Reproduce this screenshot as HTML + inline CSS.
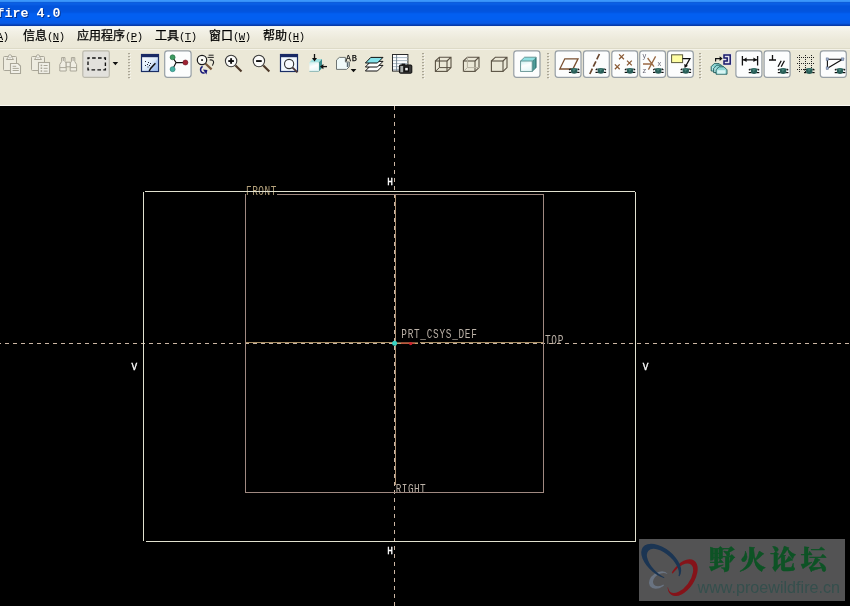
<!DOCTYPE html>
<html lang="zh"><head><meta charset="utf-8"><title>Pro/ENGINEER Wildfire 4.0</title>
<style>
html,body{margin:0;padding:0;background:#000;overflow:hidden;width:850px;height:606px}
svg{display:block;position:absolute;left:0;top:0;will-change:transform;opacity:0.999}
.mono{font-family:"Liberation Mono","DejaVu Sans Mono",monospace}
.cjk{font-family:"Liberation Sans","Noto Sans CJK SC","WenQuanYi Zen Hei",sans-serif}
.song{font-family:"Liberation Serif","Noto Serif CJK SC",serif}
.sans{font-family:"Liberation Sans",sans-serif}
</style></head><body>
<svg width="850" height="606" viewBox="0 0 850 606">
<defs>
<linearGradient id="tb" x1="0" y1="0" x2="0" y2="1">
<stop offset="0" stop-color="#3f8cf3"/>
<stop offset="0.10" stop-color="#1c6cee"/>
<stop offset="0.22" stop-color="#0a5be4"/>
<stop offset="0.55" stop-color="#0a5ce8"/>
<stop offset="0.80" stop-color="#0b5ae6"/>
<stop offset="0.92" stop-color="#0648cc"/>
<stop offset="1" stop-color="#0338b0"/>
</linearGradient>
<linearGradient id="mb" x1="0" y1="0" x2="0" y2="1">
<stop offset="0" stop-color="#eef3f6"/>
<stop offset="0.06" stop-color="#f8f7f0"/>
<stop offset="0.25" stop-color="#f3f1e6"/>
<stop offset="0.6" stop-color="#edeadb"/>
<stop offset="1" stop-color="#ebe8d7"/>
</linearGradient>
<linearGradient id="btn" x1="0" y1="0" x2="0" y2="1">
<stop offset="0" stop-color="#ffffff"/>
<stop offset="1" stop-color="#f6f6f2"/>
</linearGradient>
</defs>

<rect x="0" y="0" width="850" height="606" fill="#000"/>
<g shape-rendering="crispEdges"><rect x="0" y="0" width="850" height="1" fill="#3c98fc"/><rect x="0" y="1" width="850" height="1" fill="#3690f8"/><rect x="0" y="2" width="850" height="1" fill="#0e5edc"/><rect x="0" y="3" width="850" height="1" fill="#0a60e6"/><rect x="0" y="4" width="850" height="1" fill="#0a5ee4"/><rect x="0" y="5" width="850" height="1" fill="#0658e0"/><rect x="0" y="6" width="850" height="1" fill="#0355de"/><rect x="0" y="7" width="850" height="1" fill="#0355de"/><rect x="0" y="8" width="850" height="1" fill="#0355de"/><rect x="0" y="9" width="850" height="1" fill="#0355de"/><rect x="0" y="10" width="850" height="1" fill="#0355de"/><rect x="0" y="11" width="850" height="1" fill="#0356e0"/><rect x="0" y="12" width="850" height="1" fill="#0258e6"/><rect x="0" y="13" width="850" height="1" fill="#035eee"/><rect x="0" y="14" width="850" height="1" fill="#0360f2"/><rect x="0" y="15" width="850" height="1" fill="#0360f2"/><rect x="0" y="16" width="850" height="1" fill="#0360f2"/><rect x="0" y="17" width="850" height="1" fill="#0360f2"/><rect x="0" y="18" width="850" height="1" fill="#0360f2"/><rect x="0" y="19" width="850" height="1" fill="#0360f0"/><rect x="0" y="20" width="850" height="1" fill="#065eee"/><rect x="0" y="21" width="850" height="1" fill="#0a5ce8"/><rect x="0" y="22" width="850" height="1" fill="#0a5ce8"/><rect x="0" y="23" width="850" height="1" fill="#0a58de"/><rect x="0" y="24" width="850" height="1" fill="#0648c6"/><rect x="0" y="25" width="850" height="1" fill="#0a3ca8"/></g>
<rect x="0" y="26" width="850" height="23" fill="url(#mb)"/>
<rect x="0" y="48" width="850" height="1" fill="#dedbc8"/>
<rect x="0" y="49" width="850" height="56" fill="#ece9d8"/>
<rect x="0" y="49" width="850" height="1" fill="#f6f4ea"/>
<rect x="0" y="105" width="850" height="1" fill="#fbfaf4"/>
<text class="mono" x="-2.4" y="18" font-size="13.33" font-weight="bold" fill="#0a246a" opacity="0.7" xml:space="preserve">fire 4.0</text>
<text class="mono" x="-3.4" y="17" font-size="13.33" font-weight="bold" fill="#fff" xml:space="preserve">fire 4.0</text>
<text class="mono" x="-9" y="40" font-size="10.6" fill="#000" textLength="18" lengthAdjust="spacing">(A)</text>
<rect x="-3" y="41" width="6" height="1" fill="#000"/>
<text y="40" fill="#000"><tspan class="cjk" x="23" font-size="12" stroke="#000" stroke-width="0.25" textLength="24" lengthAdjust="spacing">信息</tspan><tspan class="mono" x="47" font-size="10.6" textLength="18" lengthAdjust="spacing">(N)</tspan></text><rect x="53" y="41" width="6" height="1" fill="#000"/>
<text y="40" fill="#000"><tspan class="cjk" x="77" font-size="12" stroke="#000" stroke-width="0.25" textLength="48" lengthAdjust="spacing">应用程序</tspan><tspan class="mono" x="125" font-size="10.6" textLength="18" lengthAdjust="spacing">(P)</tspan></text><rect x="131" y="41" width="6" height="1" fill="#000"/>
<text y="40" fill="#000"><tspan class="cjk" x="155" font-size="12" stroke="#000" stroke-width="0.25" textLength="24" lengthAdjust="spacing">工具</tspan><tspan class="mono" x="179" font-size="10.6" textLength="18" lengthAdjust="spacing">(T)</tspan></text><rect x="185" y="41" width="6" height="1" fill="#000"/>
<text y="40" fill="#000"><tspan class="cjk" x="209" font-size="12" stroke="#000" stroke-width="0.25" textLength="24" lengthAdjust="spacing">窗口</tspan><tspan class="mono" x="233" font-size="10.6" textLength="18" lengthAdjust="spacing">(W)</tspan></text><rect x="239" y="41" width="6" height="1" fill="#000"/>
<text y="40" fill="#000"><tspan class="cjk" x="263" font-size="12" stroke="#000" stroke-width="0.25" textLength="24" lengthAdjust="spacing">帮助</tspan><tspan class="mono" x="287" font-size="10.6" textLength="18" lengthAdjust="spacing">(H)</tspan></text><rect x="293" y="41" width="6" height="1" fill="#000"/>
<g id="toolbar">
<g fill="none" stroke="#aaa799" stroke-width="1"><rect x="3.5" y="56.5" width="13" height="14" rx="1" fill="#efede1"/><path d="M6.5 59.5 L8 57.4 Q8.2 54.7 10 54.7 Q11.8 54.7 12 57.4 L13.5 59.5 Z" fill="#f7f6ef"/><path d="M8.8 58.2 L10 56.6 L11.2 58.2 Z" fill="#aaa799" stroke="none" opacity="0.7"/></g>
<g fill="#f3f2ea" stroke="#aaa799" stroke-width="1.1"><path d="M10.5 63.5 H18 L20.5 66 V73.5 H10.5 Z"/></g>
<g stroke="#aaa799" stroke-width="1"><path d="M12.6 66.3 H16.2 M12.6 68.4 H18.8 M12.6 70.5 H18.8"/></g>
<g fill="none" stroke="#aaa799" stroke-width="1"><rect x="31.5" y="56.5" width="13" height="14" rx="1" fill="#efede1"/><path d="M34.5 59.5 L36 57.4 Q36.2 54.7 38 54.7 Q39.8 54.7 40 57.4 L41.5 59.5 Z" fill="#f7f6ef"/><path d="M36.8 58.2 L38 56.6 L39.2 58.2 Z" fill="#aaa799" stroke="none" opacity="0.7"/></g>
<g fill="#f3f2ea" stroke="#aaa799" stroke-width="1.1"><rect x="38.5" y="62.5" width="11" height="11"/></g>
<g fill="#aaa799"><rect x="40.6" y="64.6" width="1.6" height="1.6"/><rect x="40.6" y="67.4" width="1.6" height="1.6"/><rect x="40.6" y="70.2" width="1.6" height="1.6"/><rect x="43.6" y="65" width="4" height="1"/><rect x="43.6" y="67.8" width="4" height="1"/><rect x="43.6" y="70.6" width="4" height="1"/></g>
<g fill="#f1efe4" stroke="#aaa799" stroke-width="1"><path d="M59.8 71 V64.5 L61.6 61.6 V57.6 H65 V61.6 L66.2 63 V71 Z"/><path d="M70.2 71 V63 L71.4 61.6 V57.6 H74.8 V61.6 L76.6 64.5 V71 Z"/><rect x="66.2" y="62.2" width="4" height="4.6"/><path d="M59.8 67.6 H66.2 M70.2 67.6 H76.6 M63.3 57.6 V61 M73.1 57.6 V61" fill="none"/></g>
<rect x="82.8" y="50.9" width="26.5" height="26.4" rx="1.8" ry="1.8" fill="#e3e2dd" stroke="#bcbaad" stroke-width="1.2"/>
<rect x="88" y="58" width="17.4" height="11.8" fill="none" stroke="#111" stroke-width="1.35" stroke-dasharray="3.6 2.3" stroke-dashoffset="1.8"/>
<path d="M112.6 62 H118.2 L115.4 65.2 Z" fill="#111"/>
<rect x="129" y="54" width="2" height="1" fill="#f8f7ef"/><rect x="128" y="53" width="2" height="1.3" fill="#aba795"/><rect x="129" y="57" width="2" height="1" fill="#f8f7ef"/><rect x="128" y="56" width="2" height="1.3" fill="#aba795"/><rect x="129" y="60" width="2" height="1" fill="#f8f7ef"/><rect x="128" y="59" width="2" height="1.3" fill="#aba795"/><rect x="129" y="63" width="2" height="1" fill="#f8f7ef"/><rect x="128" y="62" width="2" height="1.3" fill="#aba795"/><rect x="129" y="66" width="2" height="1" fill="#f8f7ef"/><rect x="128" y="65" width="2" height="1.3" fill="#aba795"/><rect x="129" y="69" width="2" height="1" fill="#f8f7ef"/><rect x="128" y="68" width="2" height="1.3" fill="#aba795"/><rect x="129" y="72" width="2" height="1" fill="#f8f7ef"/><rect x="128" y="71" width="2" height="1.3" fill="#aba795"/><rect x="129" y="75" width="2" height="1" fill="#f8f7ef"/><rect x="128" y="74" width="2" height="1.3" fill="#aba795"/><rect x="129" y="78" width="2" height="1" fill="#f8f7ef"/><rect x="128" y="77" width="2" height="1.3" fill="#aba795"/>
<defs><linearGradient id="rp" x1="0" y1="0" x2="1" y2="1"><stop offset="0" stop-color="#ffffff"/><stop offset="0.5" stop-color="#e2effc"/><stop offset="1" stop-color="#9dbcef"/></linearGradient></defs>
<rect x="141.5" y="54.5" width="17" height="17" fill="url(#rp)" stroke="#1b2f66" stroke-width="1.2"/>
<rect x="141" y="54" width="18" height="3.2" fill="#1a2a66"/>
<path d="M158 58 L158 71 L150 71 Z" fill="#9fbdee" opacity="0.55"/>
<path d="M149.2 71 L150.6 68.4 L155.4 63.2" stroke="#111" stroke-width="1.5" fill="none"/>
<g fill="#223"><rect x="145" y="61" width="1" height="1"/><rect x="148" y="62" width="1" height="1"/><rect x="147" y="64" width="1" height="1"/><rect x="145" y="65" width="1" height="1"/><rect x="149" y="65" width="1" height="1"/><rect x="150" y="63" width="1" height="1"/><rect x="147.5" y="66.5" width="1" height="1"/></g>
<rect x="164.7" y="50.9" width="26.4" height="26.4" rx="2.8" ry="2.8" fill="#fdfefe" stroke="#98a0a6" stroke-width="1.2"/>
<path d="M172.6 57.3 L176.1 62.6 L172.6 69.3 M176.1 62.6 H185.4" stroke="#111" stroke-width="1.1" fill="none"/>
<circle cx="172.6" cy="57.3" r="2.5" fill="#3f9c62" stroke="#1d6a3c" stroke-width="0.6"/>
<circle cx="172.6" cy="69.2" r="2.5" fill="#49b3a4" stroke="#1f7a70" stroke-width="0.6"/>
<circle cx="185.4" cy="62.5" r="2.5" fill="#a02434" stroke="#6c1420" stroke-width="0.6"/>
<path d="M205.6 63.8 L211.6 69.4" stroke="#7a5a3e" stroke-width="2.2"/>
<circle cx="202" cy="60" r="4.7" fill="#fbfbf6" stroke="#1a1a1a" stroke-width="1.2"/>
<rect x="201.2" y="59.2" width="1.7" height="1.7" fill="#111"/>
<path d="M208.6 55.2 H213.6 M207.6 57.4 H213.8" stroke="#222" stroke-width="1"/>
<path d="M209.6 60 Q213.8 59.4 213.6 62.6 L212.4 65.6" stroke="#222" stroke-width="1.1" fill="none"/>
<path d="M202.6 66.4 Q199.4 68.6 201.2 71.8 Q202.6 73.6 204.6 72.8" stroke="#1a1a7a" stroke-width="1.5" fill="none"/>
<path d="M203 69.6 L207.4 70 L206.4 74.4 Z" fill="#1a1a7a"/>
<path d="M235.5 65.4 L241.5 71.4" stroke="#4e3a2a" stroke-width="2.1"/><circle cx="231.1" cy="61" r="5.7" fill="#fcfcfa" stroke="#3c3c3c" stroke-width="1.1"/><rect x="228.3" y="60.1" width="5.6" height="1.9" fill="#111"/><rect x="230.15" y="58.2" width="1.9" height="5.6" fill="#111"/>
<path d="M263.3 65.4 L269.3 71.4" stroke="#4e3a2a" stroke-width="2.1"/><circle cx="258.9" cy="61" r="5.7" fill="#fcfcfa" stroke="#3c3c3c" stroke-width="1.1"/><rect x="256.1" y="60.1" width="5.6" height="1.9" fill="#111"/>
<rect x="280.5" y="54.5" width="17" height="17" fill="#f2f9ff" stroke="#1b2f66" stroke-width="1.2"/>
<rect x="280" y="54" width="18" height="3.2" fill="#1a2a66"/>
<path d="M292.6 67.6 L297.4 72.4" stroke="#4e3a3a" stroke-width="2"/>
<circle cx="289.1" cy="64" r="4.6" fill="#f8fbff" stroke="#333" stroke-width="1.1"/>
<defs><linearGradient id="cf" x1="0" y1="0" x2="0.3" y2="1"><stop offset="0" stop-color="#c9f1f1"/><stop offset="0.5" stop-color="#ffffff"/><stop offset="1" stop-color="#e8fafa"/></linearGradient></defs>
<path d="M309.4 62.4 L312.6 59 H322 L318.8 62.4 Z" fill="#9fe2e2"/>
<path d="M318.8 62.4 L322 59 V68 L318.8 71.4 Z" fill="#3a8c8c"/>
<rect x="309.4" y="62.4" width="9.4" height="9" fill="url(#cf)"/>
<path d="M309.4 71.4 H318.8" stroke="#7aa" stroke-width="0.8"/>
<path d="M314.5 54 V59.4" stroke="#111" stroke-width="1.3"/><path d="M312 58 H317 L314.5 61.4 Z" fill="#111"/>
<path d="M327 66.6 H322" stroke="#111" stroke-width="1.3"/><path d="M323.4 64 V69.2 L320 66.6 Z" fill="#111"/>
<path d="M336.5 69.4 V60 L339.4 57.4 H345.4 V62 H349.4 V66.6 L346.6 69.4 Z" fill="#f1fbfb" stroke="#6f7674" stroke-width="1"/>
<path d="M347.6 62.4 V67" stroke="#5a6a72" stroke-width="1.6"/>
<text class="mono" x="345.8" y="60.9" font-size="8.6" fill="#111" stroke="#111" stroke-width="0.25" letter-spacing="0.7">AB</text>
<path d="M350.6 69 H356.4 L353.5 72.2 Z" fill="#111"/>
<path d="M365.4 71 L370.8 65.4 H383 L377.4 71 Z" fill="#ffffff" stroke="#111" stroke-width="1"/>
<path d="M365.4 67 L370.8 61.4 H383 L377.4 67 Z" fill="#ffffff" stroke="#111" stroke-width="1"/>
<path d="M365.4 63 L370.8 57.4 H383 L377.4 63 Z" fill="#86e3ec" stroke="#111" stroke-width="1"/>
<rect x="392.5" y="54.5" width="15.4" height="16.6" fill="#fdfefe" stroke="#2a2a2a" stroke-width="1"/>
<path d="M393 57.6 H407.6 M393 60.6 H407.6 M393 63.6 H407.6 M393 66.6 H400 M393 69.4 H400" stroke="#9fb0bc" stroke-width="0.9"/>
<path d="M396.6 55 V71" stroke="#6c7c88" stroke-width="0.9"/>
<rect x="399.4" y="65" width="12.4" height="8.2" rx="1" fill="#3a3a3a" stroke="#0c0c0c" stroke-width="1"/>
<rect x="401.6" y="63.6" width="3.6" height="2" fill="#1a1a1a"/>
<rect x="400.4" y="66" width="2.6" height="6.2" fill="#a9aeac"/>
<rect x="403.8" y="66.4" width="5.2" height="5.4" fill="#111"/>
<rect x="405.2" y="67.8" width="2.6" height="2.6" fill="#f4f4f4"/>
<rect x="423" y="54" width="2" height="1" fill="#f8f7ef"/><rect x="422" y="53" width="2" height="1.3" fill="#aba795"/><rect x="423" y="57" width="2" height="1" fill="#f8f7ef"/><rect x="422" y="56" width="2" height="1.3" fill="#aba795"/><rect x="423" y="60" width="2" height="1" fill="#f8f7ef"/><rect x="422" y="59" width="2" height="1.3" fill="#aba795"/><rect x="423" y="63" width="2" height="1" fill="#f8f7ef"/><rect x="422" y="62" width="2" height="1.3" fill="#aba795"/><rect x="423" y="66" width="2" height="1" fill="#f8f7ef"/><rect x="422" y="65" width="2" height="1.3" fill="#aba795"/><rect x="423" y="69" width="2" height="1" fill="#f8f7ef"/><rect x="422" y="68" width="2" height="1.3" fill="#aba795"/><rect x="423" y="72" width="2" height="1" fill="#f8f7ef"/><rect x="422" y="71" width="2" height="1.3" fill="#aba795"/><rect x="423" y="75" width="2" height="1" fill="#f8f7ef"/><rect x="422" y="74" width="2" height="1.3" fill="#aba795"/><rect x="423" y="78" width="2" height="1" fill="#f8f7ef"/><rect x="422" y="77" width="2" height="1.3" fill="#aba795"/>
<g fill="none" stroke="#5a5244" stroke-width="1.1"><rect x="435.4" y="61" width="11.6" height="10.4"/><path d="M435.4 61 L439.4 57.2 H451 V67.6 L447 71.4 M447 61 L451 57.2"/></g><g fill="none" stroke="#5a5244" stroke-width="1"><path d="M439.4 57.2 V67.6 H451 M439.4 67.6 L435.4 71.4"/></g>
<g fill="none" stroke="#5a5244" stroke-width="1.1"><rect x="463.4" y="61" width="11.6" height="10.4"/><path d="M463.4 61 L467.4 57.2 H479 V67.6 L475 71.4 M475 61 L479 57.2"/></g><g fill="none" stroke="#b9b4a4" stroke-width="1"><path d="M467.4 57.2 V67.6 H479 M467.4 67.6 L463.4 71.4"/></g>
<g fill="none" stroke="#5a5244" stroke-width="1.1"><rect x="491.4" y="61" width="11.6" height="10.4"/><path d="M491.4 61 L495.4 57.2 H507 V67.6 L503 71.4 M503 61 L507 57.2"/></g>
<rect x="513.8" y="50.9" width="26.2" height="26.4" rx="2.8" ry="2.8" fill="#fdfefe" stroke="#98a0a6" stroke-width="1.2"/>
<path d="M520.6 61 L524.6 57.2 H536.2 L532.2 61 Z" fill="#8fe0e2"/>
<path d="M532.2 61 L536.2 57.2 V67.6 L532.2 71.4 Z" fill="#2f7f7c"/>
<path d="M533.2 60.4 V70 M534.6 59 V68.8" stroke="#7fc4c0" stroke-width="0.5"/>
<rect x="520.6" y="61" width="11.6" height="10.4" fill="url(#cf)" stroke="#5f8f8f" stroke-width="0.9"/>
<path d="M520.6 61 L524.6 57.2 H536.2 V67.6 L532.2 71.4" fill="none" stroke="#4f8484" stroke-width="0.8"/>
<rect x="548" y="54" width="2" height="1" fill="#f8f7ef"/><rect x="547" y="53" width="2" height="1.3" fill="#aba795"/><rect x="548" y="57" width="2" height="1" fill="#f8f7ef"/><rect x="547" y="56" width="2" height="1.3" fill="#aba795"/><rect x="548" y="60" width="2" height="1" fill="#f8f7ef"/><rect x="547" y="59" width="2" height="1.3" fill="#aba795"/><rect x="548" y="63" width="2" height="1" fill="#f8f7ef"/><rect x="547" y="62" width="2" height="1.3" fill="#aba795"/><rect x="548" y="66" width="2" height="1" fill="#f8f7ef"/><rect x="547" y="65" width="2" height="1.3" fill="#aba795"/><rect x="548" y="69" width="2" height="1" fill="#f8f7ef"/><rect x="547" y="68" width="2" height="1.3" fill="#aba795"/><rect x="548" y="72" width="2" height="1" fill="#f8f7ef"/><rect x="547" y="71" width="2" height="1.3" fill="#aba795"/><rect x="548" y="75" width="2" height="1" fill="#f8f7ef"/><rect x="547" y="74" width="2" height="1.3" fill="#aba795"/><rect x="548" y="78" width="2" height="1" fill="#f8f7ef"/><rect x="547" y="77" width="2" height="1.3" fill="#aba795"/>
<rect x="555.2" y="50.9" width="25.8" height="26.4" rx="2.8" ry="2.8" fill="#fdfefe" stroke="#98a0a6" stroke-width="1.2"/>
<rect x="583.5" y="50.9" width="25.8" height="26.4" rx="2.8" ry="2.8" fill="#fdfefe" stroke="#98a0a6" stroke-width="1.2"/>
<rect x="611.8" y="50.9" width="25.8" height="26.4" rx="2.8" ry="2.8" fill="#fdfefe" stroke="#98a0a6" stroke-width="1.2"/>
<rect x="639.7" y="50.9" width="25.8" height="26.4" rx="2.8" ry="2.8" fill="#fdfefe" stroke="#98a0a6" stroke-width="1.2"/>
<rect x="667.5" y="50.9" width="25.8" height="26.4" rx="2.8" ry="2.8" fill="#fdfefe" stroke="#98a0a6" stroke-width="1.2"/>
<path d="M573.2 69 H559.8 L564.8 58.8 H578 L572.6 69.6" fill="none" stroke="#7a5030" stroke-width="1.3"/>
<g transform="translate(574.2 71)"><path d="M-3.5 -2.5 Q0 -3.7 3.5 -2.5 L2.9 2.1 Q0 3.3 -2.9 2.1 Z" fill="#2a5f59"/><path d="M-1.8 -2.6 L2 -2.6 L-0.4 1 Z" fill="#4d8c82" opacity="0.75"/><path d="M-3.6 -2.2 L-5.1 -0.9" stroke="#111" stroke-width="1.2" fill="none"/><path d="M3.6 -2.2 L5.1 -0.9" stroke="#111" stroke-width="1.2" fill="none"/><rect x="-5.3" y="0.8" width="2.3" height="1.2" fill="#111"/><rect x="3" y="0.8" width="2.3" height="1.2" fill="#111"/></g>
<path d="M599.4 54 L589.8 74" stroke="#6a4830" stroke-width="1.7" stroke-dasharray="6 2.1"/>
<g transform="translate(600.8 71)"><path d="M-3.5 -2.5 Q0 -3.7 3.5 -2.5 L2.9 2.1 Q0 3.3 -2.9 2.1 Z" fill="#2a5f59"/><path d="M-1.8 -2.6 L2 -2.6 L-0.4 1 Z" fill="#4d8c82" opacity="0.75"/><path d="M-3.6 -2.2 L-5.1 -0.9" stroke="#111" stroke-width="1.2" fill="none"/><path d="M3.6 -2.2 L5.1 -0.9" stroke="#111" stroke-width="1.2" fill="none"/><rect x="-5.3" y="0.8" width="2.3" height="1.2" fill="#111"/><rect x="3" y="0.8" width="2.3" height="1.2" fill="#111"/></g>
<path d="M619.1 54.4 L623.9 59.2 M623.9 54.4 L619.1 59.2" stroke="#8a5a34" stroke-width="1.3"/>
<path d="M627 60.6 L631.8 65.4 M631.8 60.6 L627 65.4" stroke="#8a5a34" stroke-width="1.3"/>
<path d="M614.9 64.4 L619.7 69.2 M619.7 64.4 L614.9 69.2" stroke="#8a5a34" stroke-width="1.3"/>
<g transform="translate(630 71)"><path d="M-3.5 -2.5 Q0 -3.7 3.5 -2.5 L2.9 2.1 Q0 3.3 -2.9 2.1 Z" fill="#2a5f59"/><path d="M-1.8 -2.6 L2 -2.6 L-0.4 1 Z" fill="#4d8c82" opacity="0.75"/><path d="M-3.6 -2.2 L-5.1 -0.9" stroke="#111" stroke-width="1.2" fill="none"/><path d="M3.6 -2.2 L5.1 -0.9" stroke="#111" stroke-width="1.2" fill="none"/><rect x="-5.3" y="0.8" width="2.3" height="1.2" fill="#111"/><rect x="3" y="0.8" width="2.3" height="1.2" fill="#111"/></g>
<path d="M643 64 H652 M648.4 69.6 L655.6 56.4 M647.6 58 L654 66.6" stroke="#9a6a44" stroke-width="1.3" fill="none"/>
<text class="sans" x="642.6" y="58.4" font-size="7.5" fill="#6a6a78">y</text>
<text class="sans" x="657.6" y="66" font-size="7.5" fill="#6a6a78">x</text>
<text class="sans" x="642.6" y="73.4" font-size="7.5" fill="#6a6a78">z</text>
<g transform="translate(658.3 71)"><path d="M-3.5 -2.5 Q0 -3.7 3.5 -2.5 L2.9 2.1 Q0 3.3 -2.9 2.1 Z" fill="#2a5f59"/><path d="M-1.8 -2.6 L2 -2.6 L-0.4 1 Z" fill="#4d8c82" opacity="0.75"/><path d="M-3.6 -2.2 L-5.1 -0.9" stroke="#111" stroke-width="1.2" fill="none"/><path d="M3.6 -2.2 L5.1 -0.9" stroke="#111" stroke-width="1.2" fill="none"/><rect x="-5.3" y="0.8" width="2.3" height="1.2" fill="#111"/><rect x="3" y="0.8" width="2.3" height="1.2" fill="#111"/></g>
<rect x="671.6" y="54.8" width="11" height="7.8" fill="#ffffa4" stroke="#5c5c3c" stroke-width="1"/>
<path d="M682.6 58.6 H690 L685.4 66.6" fill="none" stroke="#111" stroke-width="1.2"/>
<path d="M684.2 64 L684.6 68 L688 65.8 Z" fill="#111"/>
<g transform="translate(685.8 71)"><path d="M-3.5 -2.5 Q0 -3.7 3.5 -2.5 L2.9 2.1 Q0 3.3 -2.9 2.1 Z" fill="#2a5f59"/><path d="M-1.8 -2.6 L2 -2.6 L-0.4 1 Z" fill="#4d8c82" opacity="0.75"/><path d="M-3.6 -2.2 L-5.1 -0.9" stroke="#111" stroke-width="1.2" fill="none"/><path d="M3.6 -2.2 L5.1 -0.9" stroke="#111" stroke-width="1.2" fill="none"/><rect x="-5.3" y="0.8" width="2.3" height="1.2" fill="#111"/><rect x="3" y="0.8" width="2.3" height="1.2" fill="#111"/></g>
<rect x="700" y="54" width="2" height="1" fill="#f8f7ef"/><rect x="699" y="53" width="2" height="1.3" fill="#aba795"/><rect x="700" y="57" width="2" height="1" fill="#f8f7ef"/><rect x="699" y="56" width="2" height="1.3" fill="#aba795"/><rect x="700" y="60" width="2" height="1" fill="#f8f7ef"/><rect x="699" y="59" width="2" height="1.3" fill="#aba795"/><rect x="700" y="63" width="2" height="1" fill="#f8f7ef"/><rect x="699" y="62" width="2" height="1.3" fill="#aba795"/><rect x="700" y="66" width="2" height="1" fill="#f8f7ef"/><rect x="699" y="65" width="2" height="1.3" fill="#aba795"/><rect x="700" y="69" width="2" height="1" fill="#f8f7ef"/><rect x="699" y="68" width="2" height="1.3" fill="#aba795"/><rect x="700" y="72" width="2" height="1" fill="#f8f7ef"/><rect x="699" y="71" width="2" height="1.3" fill="#aba795"/><rect x="700" y="75" width="2" height="1" fill="#f8f7ef"/><rect x="699" y="74" width="2" height="1.3" fill="#aba795"/><rect x="700" y="78" width="2" height="1" fill="#f8f7ef"/><rect x="699" y="77" width="2" height="1.3" fill="#aba795"/>
<rect x="723" y="53.6" width="9" height="11.6" fill="#e2e2f2" opacity="0.8"/>
<path d="M724 55 H730.2 V64 H724 V61 H727.2 V58 H724 Z" fill="none" stroke="#1a1a6a" stroke-width="1.5"/>
<path d="M715.6 61.6 V58.6 H720" fill="none" stroke="#111" stroke-width="1.2"/><path d="M719.6 56.2 V61 L722.6 58.6 Z" fill="#111"/>
<path d="M711.2 66.6 L714.2 63.6 H719.2 L722.2 66.6 V71 H711.2 Z" fill="#8fd8d6" stroke="#1f5a5a" stroke-width="0.9"/><rect x="712.4" y="67" width="8.2" height="3.4" fill="#d9f6f4"/>
<path d="M713.6 68.2 L716.6 65.2 H721.6 L724.6 68.2 V72.6 H713.6 Z" fill="#8fd8d6" stroke="#1f5a5a" stroke-width="0.9"/><rect x="714.8" y="68.6" width="8.2" height="3.4" fill="#d9f6f4"/>
<path d="M716 69.8 L719 66.8 H724 L727 69.8 V74.2 H716 Z" fill="#8fd8d6" stroke="#1f5a5a" stroke-width="0.9"/><rect x="717.2" y="70.2" width="8.2" height="3.4" fill="#d9f6f4"/>
<rect x="735.9" y="50.9" width="26" height="26.4" rx="2.8" ry="2.8" fill="#fdfefe" stroke="#98a0a6" stroke-width="1.2"/>
<rect x="764.1" y="50.9" width="26" height="26.4" rx="2.8" ry="2.8" fill="#fdfefe" stroke="#98a0a6" stroke-width="1.2"/>
<rect x="820.3" y="50.9" width="26" height="26.4" rx="2.8" ry="2.8" fill="#fdfefe" stroke="#98a0a6" stroke-width="1.2"/>
<path d="M742.4 56 V65.6 M757.6 56 V65.6 M743 59.8 H757" stroke="#111" stroke-width="1.3" fill="none"/>
<path d="M743 59.8 L746.6 57.6 V62 Z M757 59.8 L753.4 57.6 V62 Z" fill="#111"/>
<g transform="translate(754 71.2)"><path d="M-3.5 -2.5 Q0 -3.7 3.5 -2.5 L2.9 2.1 Q0 3.3 -2.9 2.1 Z" fill="#2a5f59"/><path d="M-1.8 -2.6 L2 -2.6 L-0.4 1 Z" fill="#4d8c82" opacity="0.75"/><path d="M-3.6 -2.2 L-5.1 -0.9" stroke="#111" stroke-width="1.2" fill="none"/><path d="M3.6 -2.2 L5.1 -0.9" stroke="#111" stroke-width="1.2" fill="none"/><rect x="-5.3" y="0.8" width="2.3" height="1.2" fill="#111"/><rect x="3" y="0.8" width="2.3" height="1.2" fill="#111"/></g>
<path d="M769 60 H776 M772.5 55 V60" stroke="#111" stroke-width="1.3"/>
<path d="M781.2 60.8 L778 66.8 M784.4 60.8 L781.2 66.8" stroke="#111" stroke-width="1.3"/>
<g transform="translate(783.1 71.2)"><path d="M-3.5 -2.5 Q0 -3.7 3.5 -2.5 L2.9 2.1 Q0 3.3 -2.9 2.1 Z" fill="#2a5f59"/><path d="M-1.8 -2.6 L2 -2.6 L-0.4 1 Z" fill="#4d8c82" opacity="0.75"/><path d="M-3.6 -2.2 L-5.1 -0.9" stroke="#111" stroke-width="1.2" fill="none"/><path d="M3.6 -2.2 L5.1 -0.9" stroke="#111" stroke-width="1.2" fill="none"/><rect x="-5.3" y="0.8" width="2.3" height="1.2" fill="#111"/><rect x="3" y="0.8" width="2.3" height="1.2" fill="#111"/></g>
<g fill="#222"><rect x="797" y="57" width="1" height="1"/><rect x="797" y="63" width="1" height="1"/><rect x="797" y="69" width="1" height="1"/><rect x="799" y="55" width="1" height="1"/><rect x="799" y="57" width="1" height="1"/><rect x="799" y="59" width="1" height="1"/><rect x="799" y="61" width="1" height="1"/><rect x="799" y="63" width="1" height="1"/><rect x="799" y="65" width="1" height="1"/><rect x="799" y="67" width="1" height="1"/><rect x="799" y="69" width="1" height="1"/><rect x="799" y="71" width="1" height="1"/><rect x="801" y="57" width="1" height="1"/><rect x="801" y="63" width="1" height="1"/><rect x="801" y="69" width="1" height="1"/><rect x="803" y="57" width="1" height="1"/><rect x="803" y="63" width="1" height="1"/><rect x="803" y="69" width="1" height="1"/><rect x="805" y="55" width="1" height="1"/><rect x="805" y="57" width="1" height="1"/><rect x="805" y="59" width="1" height="1"/><rect x="805" y="61" width="1" height="1"/><rect x="805" y="63" width="1" height="1"/><rect x="805" y="65" width="1" height="1"/><rect x="805" y="67" width="1" height="1"/><rect x="805" y="69" width="1" height="1"/><rect x="805" y="71" width="1" height="1"/><rect x="807" y="57" width="1" height="1"/><rect x="807" y="63" width="1" height="1"/><rect x="807" y="69" width="1" height="1"/><rect x="809" y="57" width="1" height="1"/><rect x="809" y="63" width="1" height="1"/><rect x="809" y="69" width="1" height="1"/><rect x="811" y="55" width="1" height="1"/><rect x="811" y="57" width="1" height="1"/><rect x="811" y="59" width="1" height="1"/><rect x="811" y="61" width="1" height="1"/><rect x="811" y="63" width="1" height="1"/><rect x="811" y="65" width="1" height="1"/><rect x="811" y="67" width="1" height="1"/><rect x="811" y="69" width="1" height="1"/><rect x="811" y="71" width="1" height="1"/><rect x="813" y="57" width="1" height="1"/><rect x="813" y="63" width="1" height="1"/><rect x="813" y="69" width="1" height="1"/></g>
<g transform="translate(809.3 71.2)"><path d="M-3.5 -2.5 Q0 -3.7 3.5 -2.5 L2.9 2.1 Q0 3.3 -2.9 2.1 Z" fill="#2a5f59"/><path d="M-1.8 -2.6 L2 -2.6 L-0.4 1 Z" fill="#4d8c82" opacity="0.75"/><path d="M-3.6 -2.2 L-5.1 -0.9" stroke="#111" stroke-width="1.2" fill="none"/><path d="M3.6 -2.2 L5.1 -0.9" stroke="#111" stroke-width="1.2" fill="none"/><rect x="-5.3" y="0.8" width="2.3" height="1.2" fill="#111"/><rect x="3" y="0.8" width="2.3" height="1.2" fill="#111"/></g>
<path d="M827.4 59.2 H842.6 L827.4 68.2 Z" fill="none" stroke="#111" stroke-width="1.1"/>
<rect x="826.1" y="57.9" width="2.6" height="2.6" fill="#9fb0cc" stroke="#4a5a7a" stroke-width="0.4"/>
<rect x="841.3" y="57.9" width="2.6" height="2.6" fill="#9fb0cc" stroke="#4a5a7a" stroke-width="0.4"/>
<rect x="826.1" y="66.9" width="2.6" height="2.6" fill="#9fb0cc" stroke="#4a5a7a" stroke-width="0.4"/>
<g transform="translate(840 71.2)"><path d="M-3.5 -2.5 Q0 -3.7 3.5 -2.5 L2.9 2.1 Q0 3.3 -2.9 2.1 Z" fill="#2a5f59"/><path d="M-1.8 -2.6 L2 -2.6 L-0.4 1 Z" fill="#4d8c82" opacity="0.75"/><path d="M-3.6 -2.2 L-5.1 -0.9" stroke="#111" stroke-width="1.2" fill="none"/><path d="M3.6 -2.2 L5.1 -0.9" stroke="#111" stroke-width="1.2" fill="none"/><rect x="-5.3" y="0.8" width="2.3" height="1.2" fill="#111"/><rect x="3" y="0.8" width="2.3" height="1.2" fill="#111"/></g>
</g>
<text class="mono" transform="translate(246 194.9) scale(1 1.37)" font-size="9.4" letter-spacing="0.55" fill="#b5a27c" stroke="#b5a27c" stroke-width="0" font-weight="normal">FRONT</text>
<text class="mono" transform="translate(401.3 338.3) scale(1 1.37)" font-size="9.4" letter-spacing="0.72" fill="#bcb2a8" stroke="#bcb2a8" stroke-width="0" font-weight="normal">PRT_CSYS_DEF</text>
<text class="mono" transform="translate(545 343.6) scale(1 1.37)" font-size="9.4" letter-spacing="0.72" fill="#bcb2a8" stroke="#bcb2a8" stroke-width="0" font-weight="normal">TOP</text>
<text class="mono" transform="translate(395.8 492.6) scale(1 1.37)" font-size="9.4" letter-spacing="0.42" fill="#bcb2a8" stroke="#bcb2a8" stroke-width="0" font-weight="normal">RIGHT</text>
<text class="mono" transform="translate(387.3 185.1) scale(1 1.22)" font-size="9.4" letter-spacing="0.72" fill="#ffffff" stroke="#ffffff" stroke-width="0.35" font-weight="normal">H</text>
<text class="mono" transform="translate(387.3 554.1) scale(1 1.22)" font-size="9.4" letter-spacing="0.72" fill="#ffffff" stroke="#ffffff" stroke-width="0.35" font-weight="normal">H</text>
<text class="mono" transform="translate(131.6 370.1) scale(1 1.22)" font-size="9.4" letter-spacing="0.72" fill="#ffffff" stroke="#ffffff" stroke-width="0.35" font-weight="normal">V</text>
<text class="mono" transform="translate(642.7 370.1) scale(1 1.22)" font-size="9.4" letter-spacing="0.72" fill="#ffffff" stroke="#ffffff" stroke-width="0.35" font-weight="normal">V</text>
<g shape-rendering="crispEdges">
<path d="M-3 343.5H850" stroke="#cdb8a6" stroke-width="1" stroke-dasharray="4 4" fill="none"/>
<path d="M394.5 106V606" stroke="#cdb8a6" stroke-width="1" stroke-dasharray="4 4" fill="none"/>
<rect x="246" y="342" width="148" height="1" fill="#a88e64"/>
<rect x="420" y="342" width="123" height="1" fill="#a88e64"/>
<rect x="395" y="195" width="1" height="290" fill="#ae9274"/>
<rect x="245" y="194" width="1" height="299" fill="#a08a82"/>
<rect x="543" y="194" width="1" height="299" fill="#a08a82"/>
<rect x="277" y="194" width="267" height="1" fill="#a08a82"/>
<rect x="245" y="492" width="299" height="1" fill="#a08a82"/>
<rect x="145" y="191" width="490" height="1" fill="#e2e2d0"/>
<rect x="146" y="541" width="490" height="1" fill="#e2e2d0"/>
<rect x="143" y="192" width="1" height="349" fill="#e2e2d0"/>
<rect x="635" y="192" width="1" height="349" fill="#e2e2d0"/>
</g>
<rect x="396" y="342" width="22" height="1" fill="#c09a6c" opacity="0.6"/>
<rect x="396" y="343" width="22" height="1" fill="#c8a070"/>
<rect x="401" y="342.4" width="14" height="1.6" fill="#b8402c" opacity="0.75"/>
<circle cx="410.7" cy="343.6" r="1.7" fill="#cc2230"/>
<circle cx="394.6" cy="343.2" r="2.5" fill="#3ad4c4"/>
<g id="watermark">
<rect x="639" y="539" width="206" height="62" fill="#545455"/>
<mask id="wmg" maskUnits="userSpaceOnUse" x="630" y="530" width="90" height="76"><rect x="630" y="530" width="90" height="76" fill="#fff"/><ellipse cx="660.8" cy="579.6" rx="8.6" ry="5.7" transform="rotate(-33.3 660.8 579.6)" fill="#000"/><polygon points="660,580 667.6,573.4 672,574 671,587 664.8,586.2" fill="#000"/></mask><g mask="url(#wmg)"><ellipse cx="658.8" cy="580" rx="10.8" ry="7.5" transform="rotate(-34.5 658.8 580)" fill="#6a7482"/></g>
<mask id="wmr" maskUnits="userSpaceOnUse" x="630" y="530" width="90" height="76"><rect x="630" y="530" width="90" height="76" fill="#fff"/><ellipse cx="680.6" cy="578.2" rx="17.1" ry="9.1" transform="rotate(-53.3 680.6 578.2)" fill="#000"/><polygon points="676,579 672,572.4 664,572 662.5,588.5 667.2,587.8" fill="#000"/></mask><g mask="url(#wmr)"><ellipse cx="682.6" cy="577.6" rx="20.6" ry="11.9" transform="rotate(-56.4 682.6 577.6)" fill="#86141a"/></g>
<mask id="wmb" maskUnits="userSpaceOnUse" x="630" y="530" width="90" height="76"><rect x="630" y="530" width="90" height="76" fill="#fff"/><ellipse cx="662.9" cy="564.1" rx="19.7" ry="10.1" transform="rotate(42.9 662.9 564.1)" fill="#000"/><polygon points="667,567 663.8,579.4 672,586 682,581 680.3,577.2" fill="#000"/></mask><g mask="url(#wmb)"><ellipse cx="661.2" cy="561.6" rx="23.3" ry="13.2" transform="rotate(38.6 661.2 561.6)" fill="#1c3654"/></g>
<text class="song" x="709" y="568.8" font-size="26" font-weight="900" fill="#0e5426" stroke="#0e5426" stroke-width="0.5" letter-spacing="4.5">野火论坛</text>
<text class="sans" x="697.5" y="593.4" font-size="16.2" fill="#36504e" textLength="142.5" lengthAdjust="spacingAndGlyphs">www.proewildfire.cn</text>
</g>
</svg></body></html>
